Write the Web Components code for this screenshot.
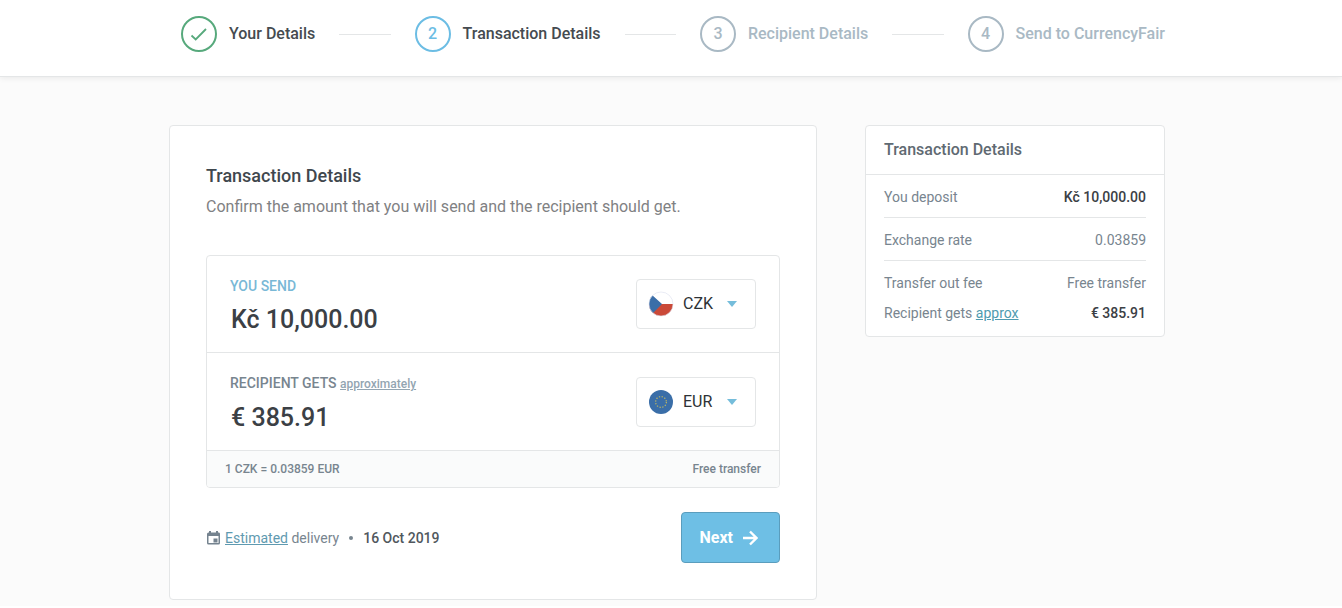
<!DOCTYPE html>
<html lang="en">
<head>
<meta charset="utf-8">
<meta name="viewport" content="width=device-width, initial-scale=1">
<title>Transaction Details</title>
<style>
  body {
    margin: 0;
    background: #fff;
    color: #3b4248;
    font: 400 16px/24px Roboto, "Liberation Sans", sans-serif;
    --line: #e4e6e7;
    --muted: #78858f;
    --blue: #6cbde4;
    --faint: #a9b9c4;
    --green: #57a97c;
  }
</style>
</head>
<body>
<transfer-page></transfer-page>

<script>
const define = (name, html, setup) => customElements.define(name, class extends HTMLElement {
  constructor() {
    super();
    const t = document.createElement('template');
    t.innerHTML = html;
    this.attachShadow({ mode: 'open' }).append(t.content.cloneNode(true));
  }
  connectedCallback() { if (setup) setup(this, this.shadowRoot); }
});

/* One step of the progress bar: a ring with a number or a tick, and a label */
define('step-item', `
  <style>
    :host { display: flex; align-items: center; gap: 12px; white-space: nowrap; font-weight: 500; color: var(--faint); --ring: var(--faint); }
    :host([state=done]) { color: #454b50; --ring: var(--green); }
    :host([state=current]) { color: #454b50; --ring: var(--blue); }
    .ring { box-sizing: border-box; width: 36px; height: 36px; border: 2px solid var(--ring); border-radius: 50%; color: var(--ring); display: grid; place-items: center; }
    svg { display: none; }
    :host([state=done]) svg { display: block; }
  </style>
  <span class="ring"><slot name="mark"></slot><svg width="18" height="18" viewBox="0 0 18 18" fill="none" stroke="currentColor" stroke-width="1.8" aria-hidden="true"><path d="M1.5 10.5l4.2 4L16 4"/></svg></span>
  <slot></slot>`);

define('step-bar', `
  <style>
    :host { display: block; background: #fff; border-bottom: 1px solid var(--line); box-shadow: 0 1px 6px rgba(0,0,0,.08); position: relative; }
    nav { box-sizing: border-box; max-width: 1004px; margin: 0 auto; padding: 16px 8px 24px 12px; display: flex; align-items: center; gap: 24px; }
    i { flex: 1; height: 1px; background: var(--line); }
  </style>
  <nav aria-label="Progress">
    <step-item state="done">Your Details</step-item><i></i>
    <step-item state="current"><span slot="mark">2</span>Transaction Details</step-item><i></i>
    <step-item><span slot="mark">3</span>Recipient Details</step-item><i></i>
    <step-item><span slot="mark">4</span>Send to CurrencyFair</step-item>
  </nav>`);

/* Drop-down with a round flag on the left and an arrow on the right */
define('currency-select', `
  <style>
    :host { display: grid; width: 120px; height: 50px; align-items: center; }
    select, ::slotted(svg), .arrow { grid-area: 1 / 1; }
    select { appearance: none; box-sizing: border-box; width: 100%; height: 100%; margin: 0; padding: 0 40px 0 46px; border: 1px solid var(--line); border-radius: 4px; background: #fff; color: #2d3236; font: 400 16px/24px Roboto, sans-serif; }
    ::slotted(svg) { margin-left: 12px; pointer-events: none; z-index: 1; }
    .arrow { justify-self: end; margin-right: 19px; pointer-events: none; z-index: 1; }
  </style>
  <select></select>
  <slot></slot>
  <svg class="arrow" width="10" height="6" viewBox="0 0 10 6" aria-hidden="true"><path d="M0 0h10L5 6z" fill="#75bddb"/></svg>`,
  (el, root) => {
    const s = root.querySelector('select');
    s.setAttribute('aria-label', el.getAttribute('label'));
    s.append(new Option(el.getAttribute('value')));
  });

/* Amount box with its caption on the left and the currency on the right */
define('amount-row', `
  <style>
    :host { display: flex; align-items: center; justify-content: space-between; gap: 16px; padding: 0 23px; border-bottom: 1px solid var(--line); }
    .field { flex: 1; min-width: 0; padding: 20px 0 14px; }
    .caption { font-size: 14px; line-height: 20px; font-weight: 500; color: var(--muted); }
    :host([active]) .caption { color: #79b8d6; }
    input { display: block; box-sizing: border-box; width: 100%; height: 36px; margin: 6px 0 0; padding: 0 1px; border: 0; background: none; color: #3b4045; font: 500 25px/36px Roboto, sans-serif; }
  </style>
  <div class="field">
    <div class="caption"><label for="amount"></label> <slot name="note"></slot></div>
    <input id="amount" type="text">
  </div>
  <slot></slot>`,
  (el, root) => {
    root.querySelector('label').textContent = el.getAttribute('label');
    root.querySelector('input').value = el.getAttribute('amount');
  });

define('primary-button', `
  <style>
    :host { display: block; }
    button { display: flex; align-items: center; gap: 10px; height: 51px; padding: 0 21px 0 18px; border: 1px solid #5a9dbd; border-radius: 4px; background: #6ebfe5; color: #fff; font: 700 16px/24px Roboto, sans-serif; }
  </style>
  <button type="button"><slot></slot><svg width="15" height="16" viewBox="0 0 15 16" fill="none" stroke="currentColor" stroke-width="2.4" aria-hidden="true"><path d="M0 8h13M7 1.5L13.5 8 7 14.5"/></svg></button>`);

define('transfer-form', `
  <style>
    :host { display: block; background: #fff; border: 1px solid var(--line); border-radius: 4px; padding: 36px; }
    h1 { margin: 0; font-size: 18px; line-height: 28px; font-weight: 500; color: #3f474d; }
    p { margin: 5px 0 36px; color: #7f8183; }
    .box { border: 1px solid var(--line); border-radius: 4px; overflow: hidden; }
    .rate { display: flex; justify-content: space-between; padding: 8px 18px; background: #fafbfb; font-size: 12px; line-height: 20px; font-weight: 500; color: var(--muted); }
    .approx { font-size: 12px; color: #93a5b1; }
    .actions { display: flex; align-items: center; justify-content: space-between; margin-top: 24px; }
    .delivery { display: flex; align-items: center; font-size: 14px; line-height: 20px; color: var(--muted); }
    .delivery svg { margin-right: 4px; }
    .delivery a { color: #5f9ab0; }
    .dot { width: 4px; height: 4px; margin: 0 10px; border-radius: 50%; background: var(--muted); }
    b { font-weight: 500; color: #50575d; }
  </style>
  <h1>Transaction Details</h1>
  <p>Confirm the amount that you will send and the recipient should get.</p>
  <div class="box">
    <amount-row active label="YOU SEND" amount="Kč 10,000.00">
      <currency-select label="Currency you send" value="CZK">
        <svg width="26" height="26" viewBox="0 0 26 26" aria-hidden="true"><clipPath id="disc"><circle cx="13" cy="13" r="12"/></clipPath><g clip-path="url(#disc)"><path fill="#fff" d="M0 0h26v13H0z"/><path fill="#ca4938" d="M0 13h26v13H0z"/><path fill="#3a6ea8" d="M0 0l4 4 10 9-9 9-5 4z"/></g><circle cx="13" cy="13" r="12" fill="none" stroke="#dcdfef" stroke-width=".6"/></svg>
      </currency-select>
    </amount-row>
    <amount-row label="RECIPIENT GETS" amount="€ 385.91">
      <a class="approx" slot="note" href="#approximately">approximately</a>
      <currency-select label="Currency the recipient gets" value="EUR">
        <svg width="26" height="26" viewBox="0 0 26 26" aria-hidden="true"><circle cx="13" cy="13" r="12" fill="#3a6ea8"/><circle cx="13" cy="13" r="5.4" fill="none" stroke="#b5b266" stroke-width="1.3" stroke-dasharray="1.3 1.527"/></svg>
      </currency-select>
    </amount-row>
    <div class="rate"><span>1 CZK = 0.03859 EUR</span><span>Free transfer</span></div>
  </div>
  <div class="actions">
    <div class="delivery">
      <svg width="15" height="16" viewBox="0 0 15 16" aria-hidden="true"><path fill="#75838f" fill-rule="evenodd" d="M3 1h2v1.500h5V1h2v1.500h1A1.500 1.500 0 0 1 14 4v9a1.500 1.500 0 0 1-1.500 1.500h-10A1.500 1.500 0 0 1 1 13V4a1.500 1.500 0 0 1 1.500-1.500H3zM2.500 6v7h10V6zM7.500 8.500h4v4h-4z"/></svg>
      <span><a href="#estimated">Estimated</a> delivery</span><span class="dot"></span><b>16 Oct 2019</b>
    </div>
    <primary-button>Next</primary-button>
  </div>`);

define('summary-row', `
  <style>
    :host { display: flex; justify-content: space-between; align-items: center; margin: 0 18px; line-height: 20px; padding: 5px 0; }
    :host([ruled]) { padding: 12px 0 10px; border-bottom: 1px solid var(--line); }
    :host([strong]) .value { font-weight: 500; color: #3b4045; }
  </style>
  <span><slot></slot></span><span class="value"><slot name="value"></slot></span>`);

define('transfer-summary', `
  <style>
    :host { display: block; background: #fff; border: 1px solid var(--line); border-radius: 4px; font-size: 14px; color: var(--muted); padding-bottom: 8px; }
    h2 { margin: 0; padding: 12px 18px; border-bottom: 1px solid var(--line); font-size: 16px; line-height: 24px; font-weight: 500; color: #5f6a72; }
    a { color: #4f9bb0; }
    .fees { padding-top: 7px; }
  </style>
  <h2>Transaction Details</h2>
  <summary-row ruled strong>You deposit<span slot="value">Kč 10,000.00</span></summary-row>
  <summary-row ruled>Exchange rate<span slot="value">0.03859</span></summary-row>
  <div class="fees">
    <summary-row>Transfer out fee<span slot="value">Free transfer</span></summary-row>
    <summary-row strong><span>Recipient gets <a href="#approx">approx</a></span><span slot="value">€ 385.91</span></summary-row>
  </div>`);

define('transfer-page', `
  <style>
    :host { display: block; }
    main { background: #fbfbfb; padding: 48px 0 6px; }
    .columns { box-sizing: border-box; max-width: 1004px; margin: 0 auto; padding-right: 8px; display: grid; grid-template-columns: minmax(0, 1fr) 300px; gap: 48px; align-items: start; }
  </style>
  <step-bar></step-bar>
  <main>
    <div class="columns">
      <transfer-form></transfer-form>
      <transfer-summary></transfer-summary>
    </div>
  </main>`);
</script>
</body>
</html>
